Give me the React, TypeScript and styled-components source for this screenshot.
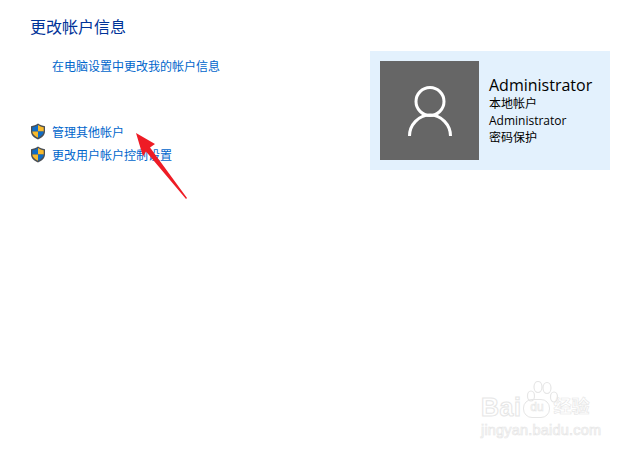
import React from 'react';
import styled, { createGlobalStyle } from 'styled-components';

const GlobalStyle = createGlobalStyle`
  html, body {
    margin: 0;
    padding: 0;
    background: #fff;
  }
  body {
    font-family: "Liberation Sans", "Noto Sans CJK SC", sans-serif;
  }
`;

const Page = styled.div`
  position: relative;
  width: 628px;
  height: 449px;
  overflow: hidden;
  box-sizing: border-box;
  padding: 16px 18px 0 30px;
  display: flex;
  justify-content: space-between;
`;

const LeftColumn = styled.div`
  display: flex;
  flex-direction: column;
`;

const Title = styled.h1`
  margin: 0;
  font-size: 16px;
  line-height: 20px;
  font-weight: 400;
  color: #003399;
  font-family: "Noto Sans CJK SC", sans-serif;
`;

const TextLink = styled.a`
  display: block;
  font-size: 12px;
  line-height: 16px;
  color: #0066cc;
  font-family: "Noto Sans CJK SC", sans-serif;
`;

const SettingsLink = styled(TextLink)`
  margin: 22px 0 0 22px;
`;

const TaskList = styled.div`
  margin-top: 49px;
  display: flex;
  flex-direction: column;
  gap: 6px;
`;

const TaskRow = styled.div`
  display: flex;
  align-items: center;
  gap: 6px;
`;

const AccountCard = styled.div`
  margin-top: 35px;
  width: 240px;
  height: 119px;
  box-sizing: border-box;
  padding: 10px;
  display: flex;
  align-items: center;
  gap: 10px;
  background: #e3f1fd;
`;

const Avatar = styled.div`
  width: 99px;
  height: 99px;
  flex: none;
  background: #666666;
  display: flex;
  align-items: center;
  justify-content: center;
`;

const AccountInfo = styled.div`
  display: flex;
  flex-direction: column;
  color: #000;
  font-family: "Open Sans", "Noto Sans CJK SC", sans-serif;
`;

const AccountName = styled.div`
  font-size: 16px;
  line-height: 20px;
`;

const AccountLine = styled.div`
  font-size: 12px;
  line-height: 17px;
`;

const Arrow = styled.svg`
  position: absolute;
  left: 130px;
  top: 130px;
`;

const Watermark = styled.div`
  position: absolute;
  left: 481px;
  top: 381px;
  width: 120px;
  height: 56px;
  color: transparent;
  -webkit-text-stroke: 1px #e6e6e6;
`;

const WatermarkRow = styled.div`
  position: absolute;
  left: 0;
  top: 12px;
  display: flex;
  align-items: center;
  font-family: "Liberation Sans", "Noto Sans CJK SC", sans-serif;
`;

const WatermarkBrand = styled.span`
  font-size: 25px;
  line-height: 28px;
  font-weight: 700;
  letter-spacing: 0.5px;
`;

const WatermarkBadge = styled.span`
  width: 27px;
  height: 19px;
  margin: 3px 3px 0 2px;
  border: 1.5px solid #e6e6e6;
  border-radius: 9px;
  box-sizing: border-box;
  font-size: 12px;
  line-height: 15px;
  text-align: center;
  -webkit-text-stroke: 0.6px #e6e6e6;
`;

const WatermarkCn = styled.span`
  font-size: 18px;
  line-height: 28px;
  font-weight: 700;
  -webkit-text-stroke: 0.6px #e6e6e6;
`;

const WatermarkUrl = styled.div`
  position: absolute;
  left: 0;
  top: 41px;
  font-size: 14.5px;
  line-height: 16px;
  white-space: nowrap;
  letter-spacing: 0.2px;
  -webkit-text-stroke: 0.7px #e6e6e6;
  font-family: "Liberation Sans", sans-serif;
`;

const Paw = styled.svg`
  position: absolute;
  left: 45px;
  top: 0;
`;

const Shield = () => (
  <svg width="16" height="17" viewBox="0 0 16 17" aria-hidden="true">
    <path d="M8 .6C6 2.2 3.6 3 1 3.2v5.2c0 3.6 3 6.3 7 8 4-1.700 7-4.400 7-8V3.200C12.400 3 10 2.200 8 .6z" fill="#4a4f55" />
    <path d="M8 2.100C6.300 3.300 4.400 4 2.300 4.300V8.500H8z" fill="#0f6cc6" />
    <path d="M8 2.100c1.700 1.200 3.600 1.900 5.700 2.200V8.500H8z" fill="#f8ba2c" />
    <path d="M2.300 8.500H8v6.300C4.700 13.300 2.500 11.200 2.300 8.500z" fill="#f8ba2c" />
    <path d="M13.700 8.500H8v6.300c3.300-1.500 5.500-3.600 5.700-6.300z" fill="#0f6cc6" />
  </svg>
);

const UserIcon = () => (
  <svg width="44" height="50" viewBox="0 0 44 50" fill="none" stroke="#fff" strokeWidth="3" aria-hidden="true">
    <circle cx="22" cy="15.500" r="14" />
    <path d="M1.500 50c0-11 9-21 20.500-21s20.500 10 20.500 21" />
  </svg>
);

export default function App() {
  return (
    <Page>
      <GlobalStyle />
      <LeftColumn>
        <Title>更改帐户信息</Title>
        <SettingsLink>在电脑设置中更改我的帐户信息</SettingsLink>
        <TaskList>
          <TaskRow>
            <Shield />
            <TextLink>管理其他帐户</TextLink>
          </TaskRow>
          <TaskRow>
            <Shield />
            <TextLink>更改用户帐户控制设置</TextLink>
          </TaskRow>
        </TaskList>
      </LeftColumn>
      <AccountCard>
        <Avatar>
          <UserIcon />
        </Avatar>
        <AccountInfo>
          <AccountName>Administrator</AccountName>
          <AccountLine>本地帐户</AccountLine>
          <AccountLine>Administrator</AccountLine>
          <AccountLine>密码保护</AccountLine>
        </AccountInfo>
      </AccountCard>
      <Arrow width="60" height="70" viewBox="0 0 60 70" aria-hidden="true">
        <path d="M6 3 L25 14 L20 17.500 L57 68 L56 69 L16 21.500 L13 26.500 Z" fill="#ee1c25" />
      </Arrow>
      <Watermark>
        <Paw width="32" height="26" viewBox="0 0 32 26" fill="none" stroke="#e6e6e6" strokeWidth="1.200" aria-hidden="true">
          <ellipse cx="5" cy="15" rx="3.500" ry="5" />
          <ellipse cx="12" cy="6" rx="4" ry="5.500" />
          <ellipse cx="21" cy="7" rx="4" ry="5.500" />
          <ellipse cx="28" cy="16" rx="3.500" ry="5" />
        </Paw>
        <WatermarkRow>
          <WatermarkBrand>Bai</WatermarkBrand>
          <WatermarkBadge>du</WatermarkBadge>
          <WatermarkCn>经验</WatermarkCn>
        </WatermarkRow>
        <WatermarkUrl>jingyan.baidu.com</WatermarkUrl>
      </Watermark>
    </Page>
  );
}
